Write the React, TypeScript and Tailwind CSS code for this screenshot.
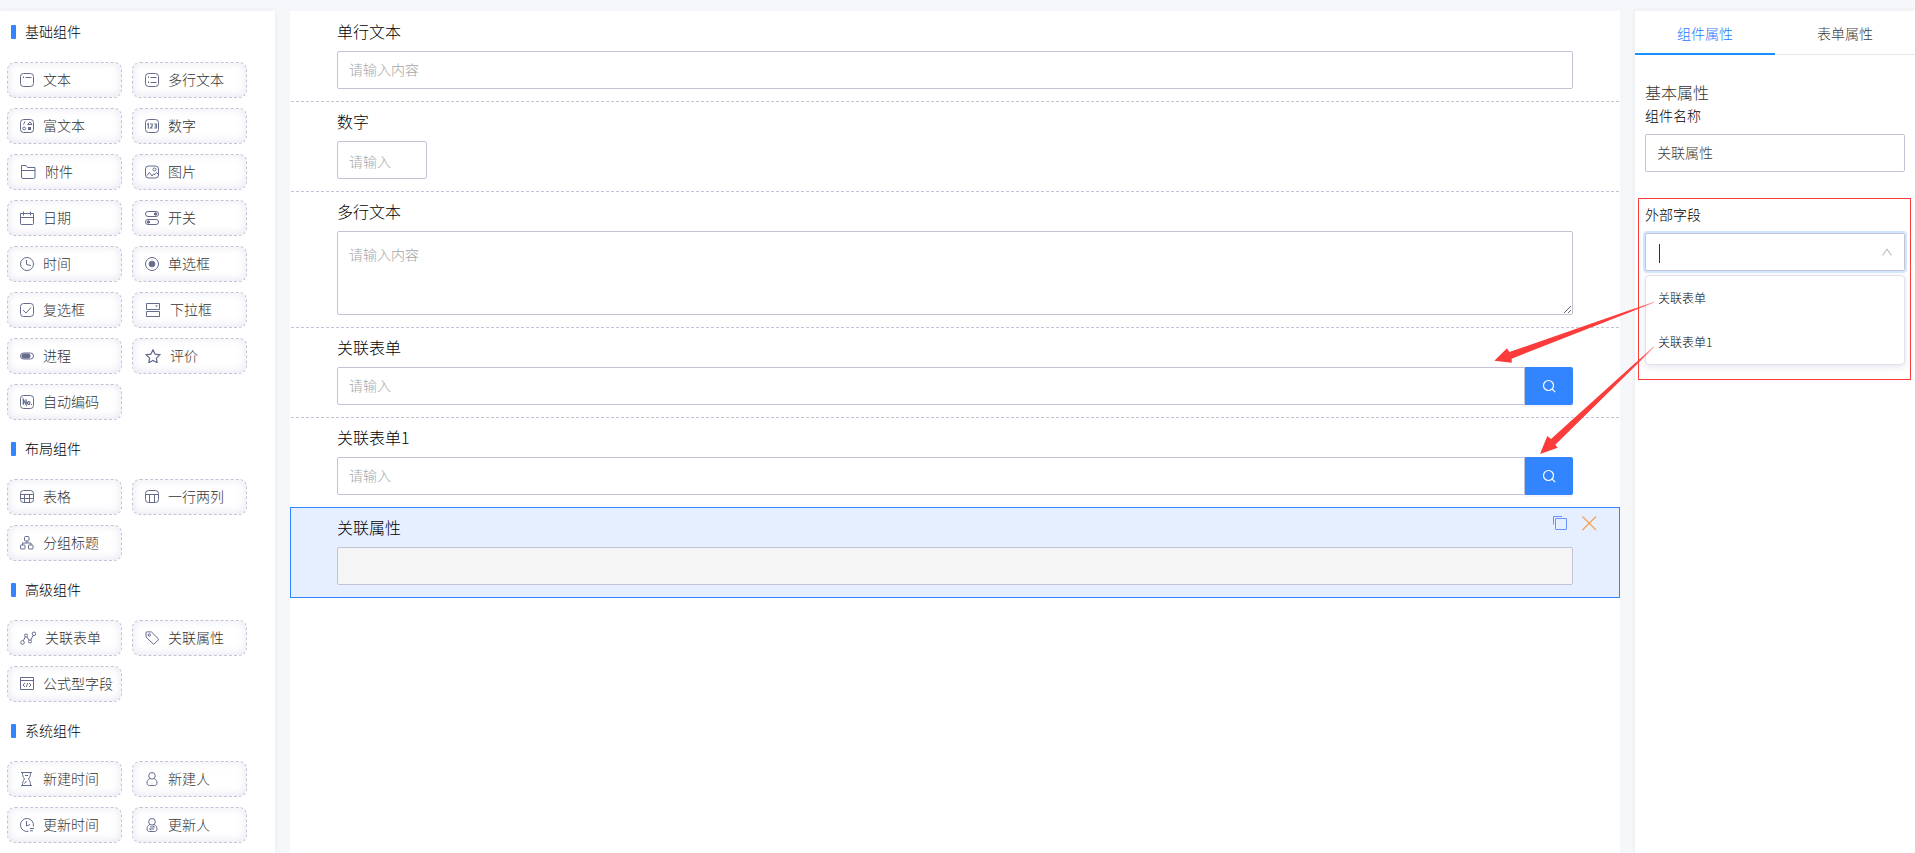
import { useState } from "react";
import type { ReactNode } from "react";
import clsx from "clsx";

type Item = {
  label: string;
  icon: ReactNode;
  wide?: boolean;
};

type Group = {
  title: string;
  items: Item[];
};

const frame = <rect x="0.5" y="0.5" width="13" height="13" rx="3" />;

const groups: Group[] = [
  {
    title: "基础组件",
    items: [
      { label: "文本", icon: <>{frame}<path d="M3.5 3.500v1.500M5.500 4.500h6" /></> },
      { label: "多行文本", icon: <>{frame}<path d="M3.500 3.500v1.500M5.500 4.500h6M3.500 8.500V10M5.500 9.500h6" /></> },
      {
        label: "富文本",
        icon: (
          <>
            {frame}
            <path d="M5 2.500L3.500 5.500M7.500 5.500h4.500L10 3z" />
            <circle cx="4.200" cy="9.500" r="1.400" />
            <rect x="8.500" y="8.500" width="2" height="2" fill="currentColor" />
          </>
        ),
      },
      {
        label: "数字",
        icon: (
          <>
            {frame}
            <path
              d="M2.300 5.500l1-.8v4.800M5.200 5h2v2L5.400 9h2.200M9.200 5h2.200v4H9.200M9.700 7h1.700"
              strokeWidth="1.100"
            />
          </>
        ),
      },
      { label: "附件", wide: true, icon: <path d="M1.500 12V.5h4.500l1.500 2h7.500v9.500a1.500 1.500 0 0 1-1.500 1.500H3A1.500 1.500 0 0 1 1.500 12zM1.500 5.500H15" /> },
      {
        label: "图片",
        icon: (
          <>
            <rect x="0.5" y="1" width="13" height="12" rx="3" />
            <circle cx="9.500" cy="4.500" r="1.500" />
            <path d="M2 10.500l2.500-3 2.500 3.500 1.500-2 1.500.5 1.500-2 1.500 1.500" />
          </>
        ),
      },
      { label: "日期", icon: <path d="M.5 2.500h13v10a1 1 0 0 1-1 1h-11a1 1 0 0 1-1-1zM.5 6.500h13M3.500.5v4M10.500.5v4" /> },
      {
        label: "开关",
        icon: (
          <>
            <rect x="0.5" y="0.5" width="13" height="5" rx="2.500" />
            <rect x="0.5" y="8.500" width="13" height="5" rx="2.500" />
            <circle cx="10.500" cy="3" r="1.200" fill="currentColor" />
            <circle cx="3.500" cy="11" r="1.200" fill="currentColor" />
          </>
        ),
      },
      { label: "时间", icon: <><circle cx="7" cy="7" r="6.500" /><path d="M6.500 3v4.500l4.500 1" /></> },
      { label: "单选框", icon: <><circle cx="7" cy="7" r="6.500" /><circle cx="7" cy="7" r="2.800" fill="currentColor" /></> },
      { label: "复选框", icon: <>{frame}<path d="M3 7l3 3 5-5.500" /></> },
      {
        label: "下拉框",
        wide: true,
        icon: (
          <>
            <path d="M1.500.5h13v6h-13zM1.500 8.500h13v5h-13z" />
            <path d="M10 2.500h3L11.500 4z" fill="currentColor" stroke="none" />
          </>
        ),
      },
      {
        label: "进程",
        icon: (
          <>
            <rect x="0.5" y="4" width="13" height="6" rx="3" />
            <rect x="2" y="5" width="8" height="4" rx="1.500" fill="currentColor" />
          </>
        ),
      },
      { label: "评价", wide: true, icon: <path d="M8 .8l2.100 4.300 4.700.7-3.400 3.400.8 4.500L8 11.500l-4.200 2.200.8-4.500L1.200 5.800l4.700-.7z" strokeWidth="1.200" /> },
      {
        label: "自动编码",
        icon: (
          <>
            {frame}
            <path d="M3.300 9.800V4.500l2.800 5V4.200" strokeWidth="1.300" />
            <circle cx="8.700" cy="8" r="1.300" strokeWidth="1.200" />
            <path d="M11.500 9v1" />
          </>
        ),
      },
    ],
  },
  {
    title: "布局组件",
    items: [
      { label: "表格", icon: <><rect x="0.5" y="0.5" width="13" height="12" rx="3" /><path d="M.5 4.500h13M.5 8.500h13M4.500 4.500v8M9.500 4.500v8" /></> },
      { label: "一行两列", icon: <><rect x="0.5" y="0.5" width="13" height="12" rx="3" /><path d="M.5 4.500h13M4.500 4.500v8M9.500 4.500v8" /></> },
      {
        label: "分组标题",
        icon: (
          <>
            <rect x="4.500" y="0.5" width="4.500" height="4.500" rx="1" />
            <rect x="0.5" y="9" width="4.500" height="4" rx="0.5" />
            <rect x="8.500" y="9" width="4.500" height="4" rx="0.5" />
            <path d="M6.800 5v2M2.500 9V7h8.500v2" />
          </>
        ),
      },
    ],
  },
  {
    title: "高级组件",
    items: [
      {
        label: "关联表单",
        wide: true,
        icon: (
          <>
            <circle cx="2.500" cy="11.500" r="1.800" />
            <circle cx="6" cy="4.500" r="1.500" />
            <circle cx="10" cy="10.500" r="1.500" />
            <circle cx="14" cy="2.800" r="1.800" />
            <path d="M3.300 9.800l2-3.900M6.800 5.800l2.400 3.400M10.700 9.100l2.500-4.700" />
          </>
        ),
      },
      {
        label: "关联属性",
        icon: (
          <>
            <path d="M1 2v4l7 6.800a1 1 0 0 0 1.400 0l3.800-3.800a1 1 0 0 0 0-1.400L6.500 1 2 .8A1.200 1.200 0 0 0 1 2z" />
            <circle cx="4.300" cy="4" r="1.200" />
          </>
        ),
      },
      { label: "公式型字段", icon: <path d="M.5.5h13v12H.5zM.5 3.500h13M5 6l-2 2 2 2M9 6l2 2-2 2M7.800 6l-1.600 4" /> },
    ],
  },
  {
    title: "系统组件",
    items: [
      { label: "新建时间", icon: <path d="M1 .5h11M1 13.500h11M2.500.5c0 3 .5 4.500 2 6.500-1.500 2-2 3.500-2 6.500M10.500.5c0 3-.5 4.500-2 6.500 1.500 2 2 3.500 2 6.500M5 3.500h3M6.500 9L4.500 11.500" /> },
      { label: "新建人", icon: <><circle cx="7" cy="3.800" r="3.300" /><path d="M4.800 6.500C3 7.300 2 9 2 11c0 1.700 1 2.500 2.500 2.500h5c1.500 0 2.500-.8 2.500-2.500 0-2-1-3.700-2.800-4.500" /></> },
      { label: "更新时间", icon: <path d="M13.300 8.500A6.500 6.500 0 1 0 8.500 13.300M6.500 3v5l3.500-1.500M10 10.500h4M10 12.800h3" /> },
      {
        label: "更新人",
        icon: (
          <>
            <circle cx="7" cy="3.800" r="3.300" />
            <path d="M4.800 6.500C3 7.300 2 9 2 11c0 1.700 1 2.500 2.500 2.500h5c1.500 0 2.500-.8 2.500-2.500 0-2-1-3.700-2.800-4.500M5 9h4.500L8 7.800M9 11H4.500L6 12.200" />
          </>
        ),
      },
    ],
  },
];

const inputClass =
  "h-[38px] rounded-xs border border-[#c4c3d6] px-[11px] pb-0.5 text-sm text-[#404040] outline-none placeholder:text-[#a6a6a6]";

function Chip({ item }: { item: Item }) {
  return (
    <button
      type="button"
      className="flex h-9 items-center gap-[9px] rounded-lg border border-dashed border-[#c4c3d6] bg-white pl-3 text-sm whitespace-nowrap text-[#333] shadow-[inset_0_-1px_8px_rgba(196,195,225,0.45)]"
    >
      <svg
        viewBox={item.wide ? "0 0 16 14" : "0 0 14 14"}
        className={clsx("h-[14px] shrink-0 text-[#646b8c]", item.wide ? "w-4" : "w-[14px]")}
        fill="none"
        stroke="currentColor"
        aria-hidden="true"
      >
        {item.icon}
      </svg>
      <span className="pb-0.5">{item.label}</span>
    </button>
  );
}

function Sidebar() {
  return (
    <aside className="w-[275px] shrink-0 bg-white pb-[2px] shadow-[0_0_6px_rgba(0,0,0,0.06)]">
      {groups.map((group) => (
        <section key={group.title} className="mb-2">
          <h2 className="mb-[9px] flex h-[42px] items-center pl-[11px] text-sm text-black">
            <span className="h-[14px] w-[5px] rounded-[1px] bg-[#3385ff]" />
            <span className="pb-0.5 pl-[9px]">{group.title}</span>
          </h2>
          <div className="grid grid-cols-[115px_115px] gap-[10px] pl-[7px]">
            {group.items.map((item) => (
              <Chip key={item.label} item={item} />
            ))}
          </div>
        </section>
      ))}
    </aside>
  );
}

function Field({ id, label, children }: { id: string; label: string; children: ReactNode }) {
  return (
    <div className="mx-px border-b border-dashed border-[#c4c3d6] px-[46px] pt-[7px] pb-3">
      <label htmlFor={id} className="mb-2 block text-base leading-6 text-black">{label}</label>
      {children}
    </div>
  );
}

function SearchInput({ id }: { id: string }) {
  return (
    <div className="flex">
      <input id={id} type="text" placeholder="请输入" className={clsx(inputClass, "min-w-0 flex-1 rounded-r-none")} />
      <button
        type="button"
        aria-label="搜索"
        className="flex w-12 items-center justify-center rounded-r-xs bg-[#3385ff] text-white shadow-[0_2px_0_rgba(0,0,0,0.04)]"
      >
        <svg viewBox="0 0 14 14" className="size-[14px]" fill="none" stroke="currentColor" strokeWidth="1.2">
          <circle cx="6.500" cy="6.500" r="5" />
          <path d="M10.200 10.200l3 3" />
        </svg>
      </button>
    </div>
  );
}

function Canvas() {
  return (
    <main className="min-w-0 flex-1 bg-white pt-px">
      <Field id="single" label="单行文本">
        <input id="single" type="text" placeholder="请输入内容" className={clsx(inputClass, "block w-full")} />
      </Field>
      <Field id="number" label="数字">
        <input id="number" type="text" placeholder="请输入" className={clsx(inputClass, "block w-[90px] pt-1")} />
      </Field>
      <Field id="multi" label="多行文本">
        <textarea
          id="multi"
          placeholder="请输入内容"
          className={clsx(inputClass, "block h-[84px] w-full resize-y pt-[10px] leading-6")}
        />
      </Field>
      <Field id="form" label="关联表单">
        <SearchInput id="form" />
      </Field>
      <Field id="form1" label="关联表单1">
        <SearchInput id="form1" />
      </Field>
      <div className="relative -mt-px border border-[#3385ff] bg-[#e6efff] px-[46px] pt-[7px] pb-3">
        <label htmlFor="attr" className="mb-2 block text-base leading-6 text-black">关联属性</label>
        <input id="attr" type="text" disabled className={clsx(inputClass, "block w-full bg-[#f5f5f5]")} />
        <div className="absolute top-2 right-[22px] flex gap-[14px]">
          <button type="button" aria-label="复制" className="text-[#6d90ff]">
            <svg viewBox="0 0 15 15" className="size-[15px]" fill="none" stroke="currentColor">
              <path d="M.5 8.500v-8h8.500" />
              <rect x="2.500" y="2.500" width="11" height="11" rx="0.5" />
            </svg>
          </button>
          <button type="button" aria-label="删除" className="text-[#f5a24c]">
            <svg viewBox="0 0 15 15" className="size-[15px]" fill="none" stroke="currentColor" strokeWidth="1.2">
              <path d="M.5.5l13.500 13.500M14 .5L.5 14" />
            </svg>
          </button>
        </div>
      </div>
    </main>
  );
}

function PropertyPanel() {
  const [tab, setTab] = useState("组件属性");
  const [name, setName] = useState("关联属性");

  return (
    <aside className="w-[280px] shrink-0 bg-white shadow-[0_0_6px_rgba(0,0,0,0.06)]">
      <div className="grid h-11 grid-cols-2 border-b border-[#e8e8e8]">
        {["组件属性", "表单属性"].map((t) => (
          <button
            key={t}
            type="button"
            onClick={() => setTab(t)}
            className={clsx(
              "-mb-px border-b-2 pt-0.5 text-sm",
              tab === t ? "border-[#1890ff] text-[#1f78ff]" : "border-transparent text-[#404040]"
            )}
          >
            {t}
          </button>
        ))}
      </div>
      <div className="px-[10px] pt-[25px]">
        <h3 className="text-base leading-6 text-[#333]">基本属性</h3>
        <label htmlFor="name" className="mb-2 block text-sm leading-[22px] text-black">组件名称</label>
        <input
          id="name"
          type="text"
          value={name}
          onChange={(e) => setName(e.target.value)}
          className={clsx(inputClass, "block w-full")}
        />
        <div className="relative mt-[31px]">
          <label htmlFor="outer" className="mb-2 block text-sm leading-[22px] text-black">外部字段</label>
          <div className="relative">
            <input
              id="outer"
              type="text"
              role="combobox"
              aria-expanded="true"
              aria-controls="outer-list"
              className={clsx(inputClass, "block w-full shadow-[0_0_0_2px_#d1e7ff]")}
            />
            <span className="absolute top-[11px] left-[14px] h-[19px] w-px bg-[#333]" />
            <svg
              viewBox="0 0 10 8"
              className="absolute top-[15px] right-[13px] h-2 w-[10px] text-[#bfbfbf]"
              fill="none"
              stroke="currentColor"
              strokeWidth="1.2"
            >
              <path d="M.5 7.500L5 1.200l4.500 6.300" />
            </svg>
          </div>
          <ul
            id="outer-list"
            role="listbox"
            className="mt-1 rounded border border-[#e1e0ee] bg-white text-xs text-black shadow-[0_2px_6px_rgba(180,180,210,0.35)]"
          >
            {["关联表单", "关联表单1"].map((o) => (
              <li key={o} role="option" aria-selected="false" className="flex h-11 items-center px-3">
                {o}
              </li>
            ))}
          </ul>
          <div className="pointer-events-none absolute -top-[5px] -right-[6px] -bottom-[15px] -left-[7px] border border-[#fc3b3b]" />
        </div>
      </div>
    </aside>
  );
}

// Arrows from the options to the fields they stand for
function Arrows() {
  return (
    <svg
      viewBox="0 0 445 330"
      className="pointer-events-none absolute top-[290px] right-0 h-[330px] w-[445px]"
      aria-hidden="true"
    >
      <defs>
        <linearGradient id="a1" gradientUnits="userSpaceOnUse" x1="184" y1="12" x2="160" y2="20">
          <stop offset="0" stopColor="#fc3b3b" stopOpacity="0.4" />
          <stop offset="1" stopColor="#fc3b3b" />
        </linearGradient>
        <linearGradient id="a2" gradientUnits="userSpaceOnUse" x1="184" y1="57" x2="166" y2="74">
          <stop offset="0" stopColor="#fc3b3b" stopOpacity="0.4" />
          <stop offset="1" stopColor="#fc3b3b" />
        </linearGradient>
      </defs>
      <path d="M24.300 70.700L37 58.300l2.300 3.700L183.800 11.700l.3 1L41.700 68.700v4z" fill="url(#a1)" />
      <path d="M70 164l7.300-18 3.700 3L183.500 56.500l.8.800L85.300 154.700l2.400 3z" fill="url(#a2)" />
    </svg>
  );
}

export default function App() {
  return (
    <div className="relative flex min-h-screen gap-[15px] overflow-hidden bg-[#f5f7fa] pt-[11px] font-['Noto_Sans_CJK_SC',sans-serif] font-light">
      <Sidebar />
      <Canvas />
      <PropertyPanel />
      <Arrows />
    </div>
  );
}
